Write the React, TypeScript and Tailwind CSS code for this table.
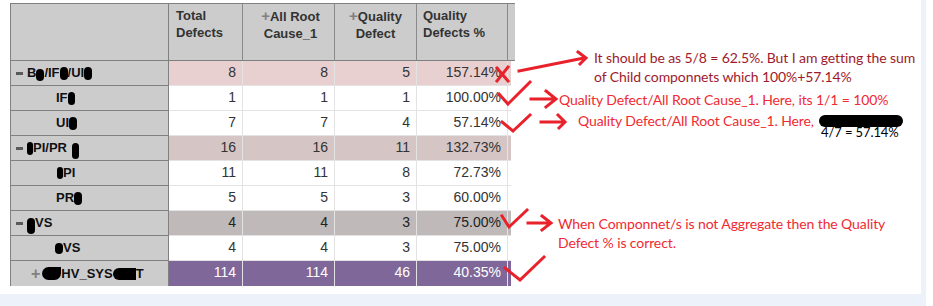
import React from "react";

type Row = {
    label: React.ReactNode;
    vals: string[];
    bg: string;
    text: string;
    last?: boolean;
};

function Blob({ className }: { className: string }) {
    return <span className={"inline-block bg-black rounded-full " + className} />;
}

// collapse toggle drawn as a small bar
function Minus() {
    return <span className="inline-block w-[7px] h-[3px] bg-[#5a5a5a] mr-[4px]" />;
}

const rows: Row[] = [
    {
        label: (
            <span className="pl-[5px] flex items-center">
                <Minus />B<Blob className="w-[8px] h-[12px] mt-[3px]" />/IF<Blob className="w-[8px] h-[13px]" />/UI<Blob className="w-[8px] h-[13px]" />
            </span>
        ),
        vals: ["8", "8", "5", "157.14%"],
        bg: "bg-[#e8d0d0]",
        text: "text-[#333]",
    },
    {
        label: (
            <span className="pl-[45px] flex items-center">
                IF<Blob className="w-[7px] h-[13px]" />
            </span>
        ),
        vals: ["1", "1", "1", "100.00%"],
        bg: "bg-white",
        text: "text-[#333]",
    },
    {
        label: (
            <span className="pl-[45px] flex items-center">
                UI<Blob className="w-[8px] h-[13px]" />
            </span>
        ),
        vals: ["7", "7", "4", "57.14%"],
        bg: "bg-white",
        text: "text-[#333]",
    },
    {
        label: (
            <span className="pl-[5px] flex items-center">
                <Minus />
                <Blob className="w-[6px] h-[13px]" />PI/PR<Blob className="w-[7px] h-[16px] ml-[5px] mt-[6px]" />
            </span>
        ),
        vals: ["16", "16", "11", "132.73%"],
        bg: "bg-[#d5c5c5]",
        text: "text-[#333]",
    },
    {
        label: (
            <span className="pl-[46px] flex items-center">
                <Blob className="w-[6px] h-[12px]" />PI
            </span>
        ),
        vals: ["11", "11", "8", "72.73%"],
        bg: "bg-white",
        text: "text-[#333]",
    },
    {
        label: (
            <span className="pl-[45px] flex items-center">
                PR<Blob className="w-[8px] h-[13px]" />
            </span>
        ),
        vals: ["5", "5", "3", "60.00%"],
        bg: "bg-white",
        text: "text-[#333]",
    },
    {
        label: (
            <span className="pl-[5px] flex items-center">
                <Minus />
                <Blob className="w-[8px] h-[16px] mt-[5px]" />VS
            </span>
        ),
        vals: ["4", "4", "3", "75.00%"],
        bg: "bg-[#bfb9b9]",
        text: "text-[#222]",
    },
    {
        label: (
            <span className="pl-[44px] flex items-center">
                <Blob className="w-[8px] h-[11px]" />VS
            </span>
        ),
        vals: ["4", "4", "3", "75.00%"],
        bg: "bg-white",
        text: "text-[#333]",
    },
    {
        label: (
            <span className="pl-[20px] flex items-center">
                <span className="text-[#808080] text-[16px] font-bold mr-[2px]">+</span>
                <Blob className="w-[19px] h-[13px] rounded-tr-[2px]" />HV_SYS<Blob className="w-[23px] h-[12px] rounded-r-[2px]" />T
            </span>
        ),
        vals: ["114", "114", "46", "40.35%"],
        bg: "bg-[#7f6899]",
        text: "text-white",
        last: true,
    },
];

const widths = ["w-[74px]", "w-[92px]", "w-[82px]", "w-[91px]"];

function Table() {
    return (
        <div className="flex flex-col w-[505px] font-['Liberation_Sans',Arial,sans-serif]">
            <div className="flex h-[58px] border-t border-b border-[#808080] bg-[#cccccc] text-[13px] font-bold leading-[17px] text-[#333]">
                <div className="w-[159px] border-l border-r border-[#808080]" />
                <div className="w-[74px] border-r border-[#8a8a8a] pt-[3px] pl-[7px]">
                    Total<br />Defects
                </div>
                <div className="w-[92px] border-r border-[#8a8a8a] pt-[3px] pl-[4px] text-center">
                    <span className="text-[#808080] text-[15px]">+</span>All Root<br />Cause_1
                </div>
                <div className="w-[82px] border-r border-[#8a8a8a] pt-[3px] text-center">
                    <span className="text-[#808080] text-[15px]">+</span>Quality<br />Defect
                </div>
                <div className="w-[91px] border-r border-[#8a8a8a] pt-[3px] pl-[6px]">
                    Quality<br />Defects %
                </div>
                <div className="w-[3px]" />
            </div>
            {rows.map((row, i) => (
                <div key={i} className="flex h-[25px]">
                    <div
                        className={
                            "w-[159px] border-l border-r border-[#808080] bg-[#cccccc] text-[13px] font-bold text-[#111] flex items-center " +
                            (row.last ? "" : "border-b")
                        }
                    >
                        {row.label}
                    </div>
                    {row.vals.map((v, j) => (
                        <div
                            key={j}
                            className={
                                widths[j] +
                                " border-r border-[#e3e3e3] flex items-center justify-end pr-[6px] pb-[2px] text-[14px] " +
                                row.bg + " " + row.text + " " +
                                (row.last ? "" : "border-b")
                            }
                        >
                            {v}
                        </div>
                    ))}
                    <div className={"w-[3px] border-[#e3e3e3] " + row.bg + " " + (row.last ? "" : "border-b")} />
                </div>
            ))}
        </div>
    );
}

function Marks() {
    const red = "#e8212b";
    return (
        <svg
            className="absolute left-0 top-0 pointer-events-none"
            width="933"
            height="306"
            fill="none"
            stroke={red}
            strokeWidth="3"
            strokeLinecap="square"
        >
            {/* cross on the wrong total */}
            <path d="M497 68 L508 81 M508 67 L497 81" />
            <path d="M519 71 L584 58 M578 52 L586 58 L580 64" />

            {/* ticks */}
            <path d="M499 94 L508 104 L530 82" />
            <path d="M531 99 L555 99 M546 91 L556 99 L546 107" />
            <path d="M502 122 L513 131 L530 115" />
            <path d="M541 122 L564 122 M558 115 L565 122 L559 128" />
            <path d="M502 216 L509 227 L527 210" />
            <path d="M528 223 L550 223 M542 216 L551 223 L542 230" />
            <path d="M505 268 L520 280 L544 257" />
        </svg>
    );
}

function Notes() {
    return (
        <div className="font-['Lato',sans-serif] text-[14px] leading-[18px] tracking-[-0.1px]">
            <div className="absolute left-[594px] top-[49px] text-[#9e1a2c] whitespace-nowrap">
                It should be as 5/8 = 62.5%. But I am getting the sum
            </div>
            <div className="absolute left-[594px] top-[68px] text-[#9e1a2c] whitespace-nowrap">
                of Child componnets which 100%+57.14%
            </div>
            <div className="absolute left-[559px] top-[91px] text-[#f02a32] whitespace-nowrap">
                Quality Defect/All Root Cause_1. Here, its 1/1 = 100%
            </div>
            <div className="absolute left-[578px] top-[112px] text-[#f02a32] whitespace-nowrap">
                Quality Defect/All Root Cause_1. Here,
            </div>
            <div className="absolute left-[819px] top-[115px] w-[84px] h-[12px] bg-black rounded-full" />
            <div className="absolute left-[821px] top-[124px] text-[13px] leading-[16px] text-black whitespace-nowrap">
                4/7 = 57.14%
            </div>
            <div className="absolute left-[558px] top-[215px] text-[#f02a32] whitespace-nowrap">
                When Componnet/s is not Aggregate then the Quality
            </div>
            <div className="absolute left-[558px] top-[234px] text-[#f02a32] whitespace-nowrap">
                Defect % is correct.
            </div>
        </div>
    );
}

export default function App() {
    return (
        <div className="relative w-[933px] h-[306px] bg-white overflow-hidden">
            <div className="w-[926px] h-[306px] bg-[#edf1f9] pr-[5px] pb-[12px]">
                <div className="w-[921px] h-[294px] bg-white pt-[3px] pl-[10px]">
                    <Table />
                </div>
            </div>
            <Marks />
            <Notes />
        </div>
    );
}
